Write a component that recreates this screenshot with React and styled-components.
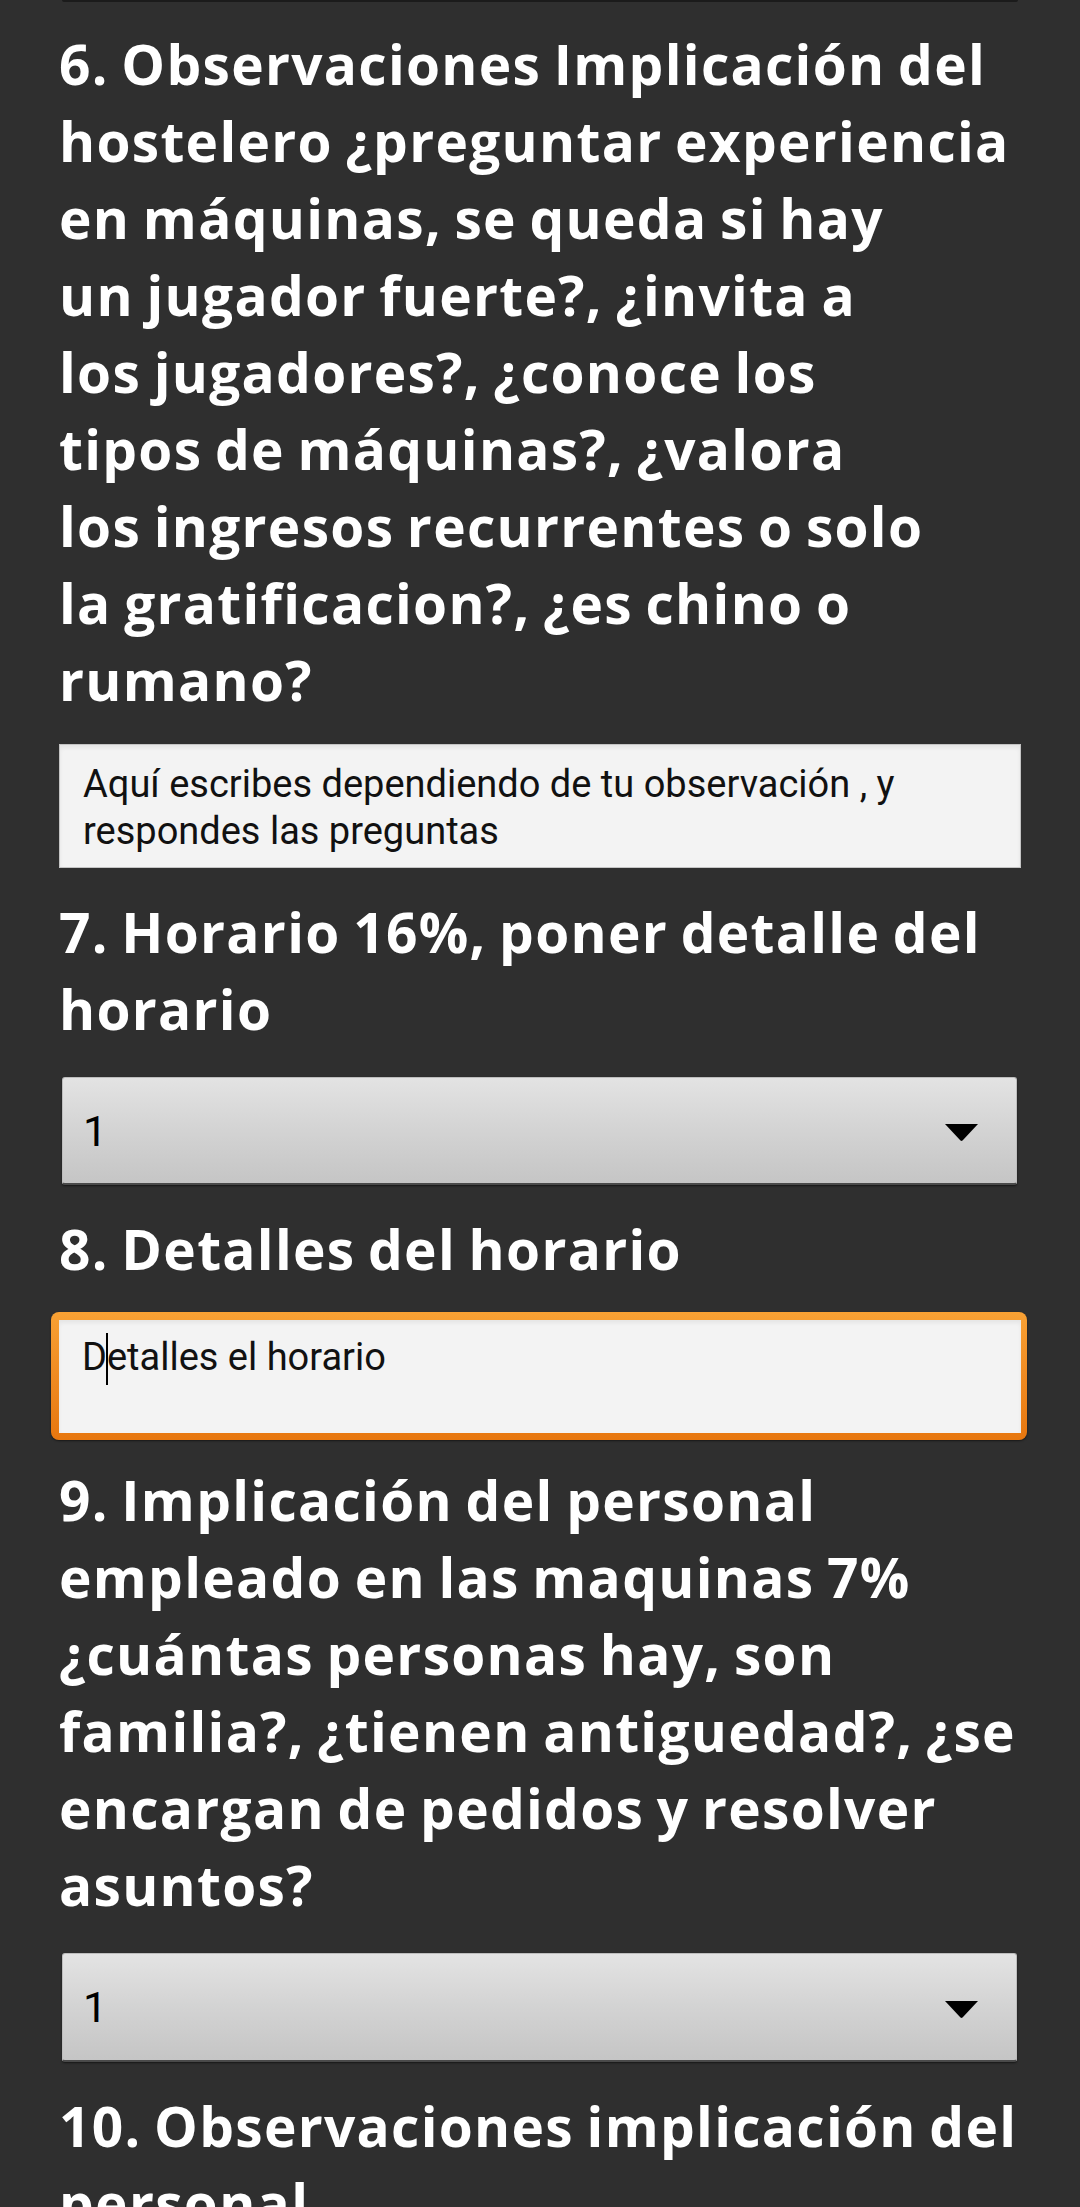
import React from "react";
import styled, { createGlobalStyle } from "styled-components";

const Global = createGlobalStyle`
  html, body {
    margin: 0;
    padding: 0;
    background: #2f2f2f;
  }
  * { box-sizing: border-box; }
`;

const Page = styled.main`
  background: #2f2f2f;
  min-height: 2207px;
  padding: 0 59px 40px 59px;
  display: flex;
  flex-direction: column;
  overflow: hidden;
`;

const PrevEdge = styled.div`
  height: 2px;
  margin: 0 3px 0 3px;
  background: #1b1b1b;
  border-radius: 0 0 2px 2px;
`;

const Heading = styled.h2`
  margin: ${(p) => p.$mt}px 0 0 0;
  color: #ffffff;
  font-family: "Open Sans", "Noto Sans", sans-serif;
  font-weight: 700;
  font-size: 55px;
  line-height: 77px;
  letter-spacing: 1.3px;
  word-spacing: -3px;
`;

const Line = styled.span`
  display: block;
  white-space: nowrap;
`;

const TextBox = styled.div`
  margin-top: ${(p) => p.$mt}px;
  height: ${(p) => p.$h}px;
  background: #f3f3f3;
  border: ${(p) => (p.$plain ? "none" : "1px solid #c4c4c4")};
  box-shadow: inset 0 3px 4px rgba(0, 0, 0, 0.06);
  padding: ${(p) => p.$pt}px 40px 0 23px;
  font-family: Roboto, "Liberation Sans", sans-serif;
  font-size: 38px;
  line-height: 47px;
  color: #111;
`;

const FocusRing = styled.div`
  margin: ${(p) => p.$mt}px -6px 0 -8px;
  padding: 8px 6px 7px 8px;
  border-radius: 8px;
  background: linear-gradient(180deg, #f8a134 0%, #f08b22 50%, #e7770f 100%);
  box-shadow: 0 1px 2px rgba(0, 0, 0, 0.5);
`;

const Caret = styled.span`
  display: inline-block;
  width: 1.5px;
  height: 52px;
  margin: 0 -0.75px;
  background: #000;
  vertical-align: -15px;
`;

const Select = styled.div`
  margin: ${(p) => p.$mt}px 4px 0 3px;
  height: ${(p) => p.$h}px;
  display: flex;
  align-items: center;
  justify-content: space-between;
  padding: 0 38px 0 20px;
  border-radius: 3px;
  border: 1px solid #bdbdbd;
  border-bottom: 2px solid #4a4a4a;
  background: linear-gradient(180deg, #e3e3e3 0%, #d3d3d3 50%, #c5c5c5 100%);
  box-shadow: 0 1px 2px rgba(0, 0, 0, 0.55);
  font-family: Roboto, "Liberation Sans", sans-serif;
  font-size: 43px;
  color: #000;
`;

const Arrow = styled.svg`
  width: 33px;
  height: 17px;
  margin-top: 4px;
  flex: none;
`;

function Title({ mt, lines }) {
  return (
    <Heading $mt={mt}>
      {lines.map((l, i) => (
        <Line key={i}>{l}</Line>
      ))}
    </Heading>
  );
}

function Dropdown({ mt, h, value }) {
  return (
    <Select $mt={mt} $h={h}>
      <span>{value}</span>
      <Arrow viewBox="0 0 33 17">
        <path d="M0 0 H33 L17.5 16.5 Q16.5 17.3 15.5 16.5 Z" fill="#000" />
      </Arrow>
    </Select>
  );
}

export default function App() {
  return (
    <>
      <Global />
      <Page>
        <PrevEdge />
        <Title
          mt={23}
          lines={[
            "6. Observaciones Implicación del",
            "hostelero ¿preguntar experiencia",
            "en máquinas, se queda si hay",
            "un jugador fuerte?, ¿invita a",
            "los jugadores?, ¿conoce los",
            "tipos de máquinas?, ¿valora",
            "los ingresos recurrentes o solo",
            "la gratificacion?, ¿es chino o",
            "rumano?",
          ]}
        />
        <TextBox $mt={26} $h={124} $pt={16}>
          Aquí escribes dependiendo de tu observación , y respondes las preguntas
        </TextBox>
        <Title mt={25} lines={["7. Horario 16%, poner detalle del", "horario"]} />
        <Dropdown mt={30} h={108} value="1" />
        <Title mt={25} lines={["8. Detalles del horario"]} />
        <FocusRing $mt={25}>
          <TextBox $mt={0} $h={113} $pt={13} $plain>
            D<Caret />etalles el horario
          </TextBox>
        </FocusRing>
        <Title
          mt={21}
          lines={[
            "9. Implicación del personal",
            "empleado en las maquinas 7%",
            "¿cuántas personas hay, son",
            "familia?, ¿tienen antiguedad?, ¿se",
            "encargan de pedidos y resolver",
            "asuntos?",
          ]}
        />
        <Dropdown mt={30} h={109} value="1" />
        <Title mt={25} lines={["10. Observaciones implicación del", "personal"]} />
      </Page>
    </>
  );
}
